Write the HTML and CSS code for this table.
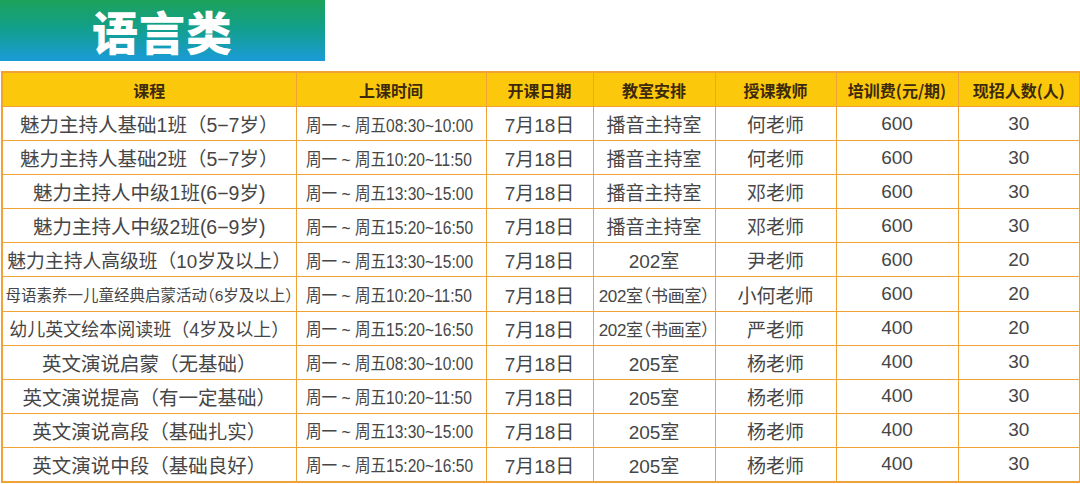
FILE: index.html
```html
<!DOCTYPE html>
<html lang="zh-CN">
<head>
<meta charset="utf-8">
<title>语言类</title>
<link rel="stylesheet" href="styles.css">
</head>
<body>
<div class="page">
  <div class="banner"><h1 class="banner-title">语言类</h1></div>
  <table class="schedule">
    <colgroup>
      <col class="c1"><col class="c2"><col class="c3"><col class="c4"><col class="c5"><col class="c6"><col class="c7">
    </colgroup>
    <thead>
      <tr>
        <th>课程</th><th>上课时间</th><th>开课日期</th><th>教室安排</th><th>授课教师</th><th>培训费(元/期)</th><th>现招人数(人)</th>
      </tr>
    </thead>
    <tbody>
      <tr><td class="course">魅力主持人基础1班（5−7岁）</td><td class="time"><span class="squeeze">周一 ~ 周五08:30~10:00</span></td><td>7月18日</td><td>播音主持室</td><td>何老师</td><td>600</td><td>30</td></tr>
      <tr><td class="course">魅力主持人基础2班（5−7岁）</td><td class="time"><span class="squeeze">周一 ~ 周五10:20~11:50</span></td><td>7月18日</td><td>播音主持室</td><td>何老师</td><td>600</td><td>30</td></tr>
      <tr><td class="course">魅力主持人中级1班(6−9岁)</td><td class="time"><span class="squeeze">周一 ~ 周五13:30~15:00</span></td><td>7月18日</td><td>播音主持室</td><td>邓老师</td><td>600</td><td>30</td></tr>
      <tr><td class="course">魅力主持人中级2班(6−9岁)</td><td class="time"><span class="squeeze">周一 ~ 周五15:20~16:50</span></td><td>7月18日</td><td>播音主持室</td><td>邓老师</td><td>600</td><td>30</td></tr>
      <tr><td class="course wide">魅力主持人高级班（10岁及以上）</td><td class="time"><span class="squeeze">周一 ~ 周五13:30~15:00</span></td><td>7月18日</td><td>202室</td><td>尹老师</td><td>600</td><td>20</td></tr>
      <tr><td class="course small">母语素养一儿童经典启蒙活动（6岁及以上）</td><td class="time"><span class="squeeze">周一 ~ 周五10:20~11:50</span></td><td>7月18日</td><td class="room">202室（书画室）</td><td>小何老师</td><td>600</td><td>20</td></tr>
      <tr><td class="course snug">幼儿英文绘本阅读班（4岁及以上）</td><td class="time"><span class="squeeze">周一 ~ 周五15:20~16:50</span></td><td>7月18日</td><td class="room">202室（书画室）</td><td>严老师</td><td>400</td><td>20</td></tr>
      <tr><td class="course">英文演说启蒙（无基础）</td><td class="time"><span class="squeeze">周一 ~ 周五08:30~10:00</span></td><td>7月18日</td><td>205室</td><td>杨老师</td><td>400</td><td>30</td></tr>
      <tr><td class="course">英文演说提高（有一定基础）</td><td class="time"><span class="squeeze">周一 ~ 周五10:20~11:50</span></td><td>7月18日</td><td>205室</td><td>杨老师</td><td>400</td><td>30</td></tr>
      <tr><td class="course">英文演说高段（基础扎实）</td><td class="time"><span class="squeeze">周一 ~ 周五13:30~15:00</span></td><td>7月18日</td><td>205室</td><td>杨老师</td><td>400</td><td>30</td></tr>
      <tr><td class="course">英文演说中段（基础良好）</td><td class="time"><span class="squeeze">周一 ~ 周五15:20~16:50</span></td><td>7月18日</td><td>205室</td><td>杨老师</td><td>400</td><td>30</td></tr>
    </tbody>
  </table>
</div>
</body>
</html>
```

FILE: styles.css
```css
html, body {
  margin: 0;
  padding: 0;
  background: #ffffff;
}

.page {
  width: 1080px;
  height: 484px;
  overflow: hidden;
  font-family: "Liberation Sans", "Noto Sans CJK SC", sans-serif;
}

.banner {
  width: 325px;
  height: 61px;
  background: linear-gradient(180deg, #1ca25a 0%, #12a08a 45%, #1a9bd8 100%);
  display: flex;
  align-items: center;
  justify-content: center;
}

.banner-title {
  margin: 0;
  color: #ffffff;
  font-family: "Noto Sans CJK SC", sans-serif;
  font-weight: 900;
  font-size: 46px;
  line-height: 1.2;
  letter-spacing: 1px;
}

.schedule {
  margin-top: 10px;
  margin-left: 1px;
  width: 1078px;
  border-collapse: collapse;
  table-layout: fixed;
  border: 2px solid #f0a236;
}

.c1 { width: 294px; }
.c2 { width: 190px; }
.c3 { width: 107px; }
.c4 { width: 122px; }
.c5 { width: 121px; }
.c6 { width: 122px; }
.c7 { width: 122px; }

.schedule th,
.schedule td {
  border: 1.5px solid #f0a236;
  padding: 0;
  text-align: center;
  white-space: nowrap;
  overflow: hidden;
}

.schedule th {
  height: 33px;
  background: #fbc80c;
  color: #3d2a0c;
  font-family: "Noto Sans CJK SC", sans-serif;
  font-weight: 700;
  font-size: 16px;
}

.schedule td {
  height: 33.1px;
  color: #464646;
  font-size: 19px;
  font-weight: 400;
}

.schedule td.course {
  font-size: 19.5px;
}

.schedule td.course.wide {
  font-size: 18.8px;
}

.schedule td.course.snug {
  font-size: 18px;
}

.schedule td.course.small {
  font-size: 15.5px;
  font-feature-settings: "halt" 1;
}

.schedule td.time {
  text-align: left;
  padding-left: 9px;
}

.squeeze {
  display: inline-block;
  font-size: 18px;
  transform: scaleX(0.865);
  transform-origin: left center;
}

.schedule td.room {
  font-size: 17px;
  font-feature-settings: "halt" 1;
  letter-spacing: -0.3px;
}
```
